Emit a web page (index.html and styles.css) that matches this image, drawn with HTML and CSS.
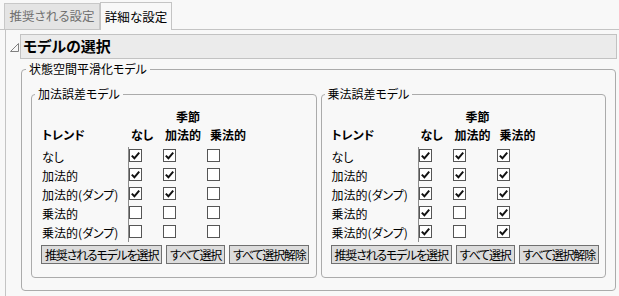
FILE: index.html
```html
<!DOCTYPE html>
<html lang="ja">
<head>
  <meta charset="UTF-8">
  <title>モデルの選択</title>
  <link rel="stylesheet" href="styles.css">
</head>
<body>
  <!-- タブ -->
  <div class="tabs">
    <div class="tab">推奨される設定</div>
    <div class="tab active">詳細な設定</div>
  </div>

  <div class="panel">
    <div class="outline-row">
      <svg class="disclosure" viewBox="0 0 10 9" width="10" height="9"><path d="M0.5 8.5 L8.5 8.5 L8.5 0.5 Z"/></svg>
      <div class="outline-title">モデルの選択</div>
    </div>

    <fieldset class="group outer">
      <legend>状態空間平滑化モデル</legend>
      <div class="model-pair">

        <!-- 加法誤差 -->
        <fieldset class="group inner">
          <legend>加法誤差モデル</legend>
          <div class="grid">
            <div class="season">季節</div>
            <div class="head trend">トレンド</div>
            <div class="head c1">なし</div>
            <div class="head c2">加法的</div>
            <div class="head c3">乗法的</div>

            <div class="rowlabel">なし</div>
            <div class="cell"><span class="cb"><svg viewBox="0 0 11 11"><path d="M1.8 5.6 L4.4 8.3 L9.2 2.6"/></svg></span></div>
            <div class="cell"><span class="cb"><svg viewBox="0 0 11 11"><path d="M1.8 5.6 L4.4 8.3 L9.2 2.6"/></svg></span></div>
            <div class="cell"><span class="cb"></span></div>

            <div class="rowlabel">加法的</div>
            <div class="cell"><span class="cb"><svg viewBox="0 0 11 11"><path d="M1.8 5.6 L4.4 8.3 L9.2 2.6"/></svg></span></div>
            <div class="cell"><span class="cb"><svg viewBox="0 0 11 11"><path d="M1.8 5.6 L4.4 8.3 L9.2 2.6"/></svg></span></div>
            <div class="cell"><span class="cb"></span></div>

            <div class="rowlabel">加法的(ダンプ)</div>
            <div class="cell"><span class="cb"><svg viewBox="0 0 11 11"><path d="M1.8 5.6 L4.4 8.3 L9.2 2.6"/></svg></span></div>
            <div class="cell"><span class="cb"><svg viewBox="0 0 11 11"><path d="M1.8 5.6 L4.4 8.3 L9.2 2.6"/></svg></span></div>
            <div class="cell"><span class="cb"></span></div>

            <div class="rowlabel">乗法的</div>
            <div class="cell"><span class="cb"></span></div>
            <div class="cell"><span class="cb"></span></div>
            <div class="cell"><span class="cb"></span></div>

            <div class="rowlabel">乗法的(ダンプ)</div>
            <div class="cell"><span class="cb"></span></div>
            <div class="cell"><span class="cb"></span></div>
            <div class="cell"><span class="cb"></span></div>
          </div>
          <div class="buttons">
            <button>推奨されるモデルを選択</button>
            <button>すべて選択</button>
            <button>すべて選択解除</button>
          </div>
        </fieldset>

        <!-- 乗法誤差 -->
        <fieldset class="group inner">
          <legend>乗法誤差モデル</legend>
          <div class="grid">
            <div class="season">季節</div>
            <div class="head trend">トレンド</div>
            <div class="head c1">なし</div>
            <div class="head c2">加法的</div>
            <div class="head c3">乗法的</div>

            <div class="rowlabel">なし</div>
            <div class="cell"><span class="cb"><svg viewBox="0 0 11 11"><path d="M1.8 5.6 L4.4 8.3 L9.2 2.6"/></svg></span></div>
            <div class="cell"><span class="cb"><svg viewBox="0 0 11 11"><path d="M1.8 5.6 L4.4 8.3 L9.2 2.6"/></svg></span></div>
            <div class="cell"><span class="cb"><svg viewBox="0 0 11 11"><path d="M1.8 5.6 L4.4 8.3 L9.2 2.6"/></svg></span></div>

            <div class="rowlabel">加法的</div>
            <div class="cell"><span class="cb"><svg viewBox="0 0 11 11"><path d="M1.8 5.6 L4.4 8.3 L9.2 2.6"/></svg></span></div>
            <div class="cell"><span class="cb"><svg viewBox="0 0 11 11"><path d="M1.8 5.6 L4.4 8.3 L9.2 2.6"/></svg></span></div>
            <div class="cell"><span class="cb"><svg viewBox="0 0 11 11"><path d="M1.8 5.6 L4.4 8.3 L9.2 2.6"/></svg></span></div>

            <div class="rowlabel">加法的(ダンプ)</div>
            <div class="cell"><span class="cb"><svg viewBox="0 0 11 11"><path d="M1.8 5.6 L4.4 8.3 L9.2 2.6"/></svg></span></div>
            <div class="cell"><span class="cb"><svg viewBox="0 0 11 11"><path d="M1.8 5.6 L4.4 8.3 L9.2 2.6"/></svg></span></div>
            <div class="cell"><span class="cb"><svg viewBox="0 0 11 11"><path d="M1.8 5.6 L4.4 8.3 L9.2 2.6"/></svg></span></div>

            <div class="rowlabel">乗法的</div>
            <div class="cell"><span class="cb"><svg viewBox="0 0 11 11"><path d="M1.8 5.6 L4.4 8.3 L9.2 2.6"/></svg></span></div>
            <div class="cell"><span class="cb"></span></div>
            <div class="cell"><span class="cb"><svg viewBox="0 0 11 11"><path d="M1.8 5.6 L4.4 8.3 L9.2 2.6"/></svg></span></div>

            <div class="rowlabel">乗法的(ダンプ)</div>
            <div class="cell"><span class="cb"><svg viewBox="0 0 11 11"><path d="M1.8 5.6 L4.4 8.3 L9.2 2.6"/></svg></span></div>
            <div class="cell"><span class="cb"></span></div>
            <div class="cell"><span class="cb"><svg viewBox="0 0 11 11"><path d="M1.8 5.6 L4.4 8.3 L9.2 2.6"/></svg></span></div>
          </div>
          <div class="buttons">
            <button>推奨されるモデルを選択</button>
            <button>すべて選択</button>
            <button>すべて選択解除</button>
          </div>
        </fieldset>

      </div>
    </fieldset>
  </div>
</body>
</html>
```

FILE: styles.css
```css
:root {
  --bg: #f8f8f8;
  --line: #c4c4c4;
  --group-line: #ababab;
  --text: #000;
  --font: "Noto Sans CJK JP", "Noto Sans", sans-serif;
}
html, body {
  height: 100%;
}
body {
  margin: 0;
  background: var(--bg);
  color: var(--text);
  font-family: var(--font);
  font-size: 12px;
  font-feature-settings: "palt";
  display: flex;
  flex-direction: column;
  overflow: hidden;
}
.tabs {
  display: flex;
  align-items: flex-end;
  height: 29px;
  padding-left: 4px;
  border-bottom: 1px solid var(--line);
  flex: none;
}
.tab {
  box-sizing: border-box;
  height: 26px;
  width: 96px;
  line-height: 24px;
  text-align: center;
  color: #707070;
  font-size: 12.5px;
  background: #e4e4e4;
  border: 1px solid #c8c8c8;
  border-bottom: none;
}
.tab.active {
  width: 72px;
  height: 28px;
  margin-bottom: -1px;
  line-height: 27px;
  color: #000;
  background: var(--bg);
  border-color: var(--line);
}
.panel {
  flex: 1;
  margin-left: 5px;
  padding: 4px 2px 0 4px;
  border-left: 1px solid var(--line);
}
.outline-row {
  display: flex;
  align-items: center;
}
.disclosure {
  width: 10px;
  flex: none;
  margin-top: 1px;
}
.disclosure path {
  fill: none;
  stroke: #808080;
  stroke-width: 1;
}
.outline-title {
  flex: 1;
  height: 23px;
  line-height: 22px;
  padding-left: 2px;
  font-size: 15px;
  font-weight: bold;
  background: #ebebeb;
  border: 1px solid #c2c2c2;
}
.group {
  margin: 0;
  min-width: 0;
  border: 1px solid var(--group-line);
  border-radius: 4px;
}
.group legend {
  padding: 0 3px;
  line-height: 16px;
}
.outer {
  margin: 2px 1px 0 11px;
  padding: 9px 9px 12px 9px;
}
.outer > legend {
  margin-left: -5px;
}
.model-pair {
  display: flex;
  gap: 4px;
}
.inner {
  flex: 1 1 0;
  padding: 6px 0 13px 10px;
}
.inner > legend {
  margin-left: -7px;
}
.grid {
  display: grid;
  grid-template-columns: 87px 34px 44px 40px;
  grid-template-rows: 18px 21px repeat(5, 19px);
}
.season {
  grid-column: 2 / 5;
  text-align: center;
  font-weight: bold;
  line-height: 18px;
}
.head {
  font-weight: bold;
  line-height: 18px;
  white-space: nowrap;
}
.head.c1,
.head.c2 {
  padding-left: 2px;
}
.head.c3 {
  padding-left: 3px;
}
.rowlabel {
  line-height: 19px;
  white-space: nowrap;
  border-right: 1px solid #8c8c8c;
}
.cell {
  padding-top: 2px;
}
.cb {
  display: block;
  box-sizing: border-box;
  width: 13px;
  height: 13px;
  background: #fff;
  border: 1px solid #555;
}
.cb svg {
  display: block;
  width: 11px;
  height: 11px;
}
.cb path {
  fill: none;
  stroke: #111;
  stroke-width: 2;
}
.buttons {
  display: flex;
  gap: 4px;
  margin: 3px 0 0 -1px;
}
button {
  height: 19px;
  padding: 0 3px;
  font-family: var(--font);
  font-size: 12px;
  font-feature-settings: "palt";
  letter-spacing: -1.2px;
  line-height: 17px;
  color: #000;
  background: #dcdcdc;
  border: 1px solid #707070;
  border-radius: 0;
  white-space: nowrap;
}
```
